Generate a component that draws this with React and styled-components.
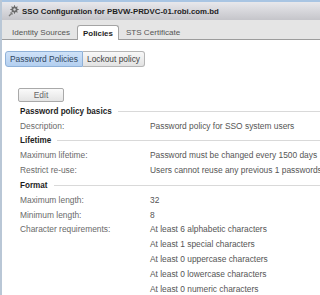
import React from "react";
import styled, { createGlobalStyle } from "styled-components";

const GlobalStyle = createGlobalStyle`
  html, body {
    margin: 0;
    padding: 0;
    overflow: hidden;
    background: #fff;
  }
  body {
    font-family: "Liberation Sans", Arial, sans-serif;
    font-size: 8.4px;
    color: #5c5c5c;
  }
`;

const rows = [
  { type: "header", text: "Password policy basics" },
  { label: "Description:", value: "Password policy for SSO system users" },
  { type: "header", text: "Lifetime" },
  { label: "Maximum lifetime:", value: "Password must be changed every 1500 days" },
  { label: "Restrict re-use:", value: "Users cannot reuse any previous 1 passwords" },
  { type: "header", text: "Format" },
  { label: "Maximum length:", value: "32" },
  { label: "Minimum length:", value: "8" },
  { label: "Character requirements:", value: "At least 6 alphabetic characters" },
  { label: "", value: "At least 1 special characters" },
  { label: "", value: "At least 0 uppercase characters" },
  { label: "", value: "At least 0 lowercase characters" },
  { label: "", value: "At least 0 numeric characters" },
];

const GearIcon = () => (
  <svg width="11" height="12" viewBox="0 0 11 12">
    <g fill="#6a6a6a">
      <circle cx="6.5" cy="4.5" r="3" />
      <rect x="6" y="0.3" width="1" height="8.4" />
      <rect x="2.3" y="4" width="8.4" height="1" />
      <rect x="6" y="0.3" width="1" height="8.4" transform="rotate(45 6.5 4.5)" />
      <rect x="6" y="0.3" width="1" height="8.4" transform="rotate(-45 6.5 4.5)" />
    </g>
    <circle cx="6.5" cy="4.5" r="1.2" fill="#d8d8dc" />
    <path d="M1 11 L4 8 M2.6 7.4 L4.6 9.4" stroke="#7a7a7a" strokeWidth="1.3" fill="none" />
  </svg>
);

const App = () => {
  return (
    <Frame>
      <GlobalStyle />
      <TitleBar>
        <GearIcon />
        <Title>SSO Configuration for PBVW-PRDVC-01.robi.com.bd</Title>
      </TitleBar>
      <TabBar>
        <Tab>Identity Sources</Tab>
        <Tab active>Policies</Tab>
        <Tab>STS Certificate</Tab>
      </TabBar>
      <Body>
        <SubTabs>
          <SubTab active>Password Policies</SubTab>
          <SubTab>Lockout policy</SubTab>
        </SubTabs>
        <EditButton>Edit</EditButton>
        <Details>
          {rows.map((row, i) =>
            row.type === "header" ? (
              <Header key={i}>{row.text}</Header>
            ) : (
              <React.Fragment key={i}>
                <Label>{row.label}</Label>
                <Value>{row.value}</Value>
              </React.Fragment>
            )
          )}
        </Details>
      </Body>
    </Frame>
  );
};

const Frame = styled.div`
  width: 320px;
  height: 295px;
  border-left: 2px solid #b9c7d6;
  box-sizing: border-box;
  overflow: hidden;
`;

const TitleBar = styled.div`
  height: 18px;
  border-top: 2px solid #a9c5e3;
  background: linear-gradient(#e8e8ec, #c5c5ca);
  display: flex;
  align-items: center;
  gap: 3px;
  padding-left: 6px;
`;

const Title = styled.span`
  font-weight: bold;
  font-size: 7.85px;
  color: #1e1e1e;
  white-space: nowrap;
`;

const TabBar = styled.div`
  height: 19px;
  background: #e5e5e5;
  border-bottom: 1px solid #9c9c9c;
  display: flex;
  align-items: flex-end;
  padding-left: 3px;
`;

const Tab = styled.div`
  height: ${(p) => (p.active ? "14px" : "13px")};
  padding: 0 ${(p) => (p.active ? "5px" : "6px")};
  display: flex;
  align-items: center;
  font-size: ${(p) => (p.active ? "7.9px" : "8.1px")};
  font-weight: ${(p) => (p.active ? "bold" : "normal")};
  color: ${(p) => (p.active ? "#1e1e1e" : "#555")};
  white-space: nowrap;
  background: ${(p) => (p.active ? "#fff" : "transparent")};
  border: 1px solid ${(p) => (p.active ? "#a4a4a4" : "transparent")};
  border-bottom: none;
  border-radius: 3px 3px 0 0;
  margin-bottom: ${(p) => (p.active ? "-1px" : "0")};
`;

const Body = styled.div`
  padding: 11px 0 0 3px;
`;

const SubTabs = styled.div`
  display: flex;
`;

const SubTab = styled.div`
  height: 14px;
  padding: 0 4px;
  display: flex;
  align-items: center;
  white-space: nowrap;
  color: ${(p) => (p.active ? "#2f4660" : "#444")};
  background: ${(p) =>
    p.active
      ? "linear-gradient(#cfe2f8, #b3cff0)"
      : "linear-gradient(#f8f8f8, #e2e2e2)"};
  border: 1px solid ${(p) => (p.active ? "#8fb1d8" : "#b5b5b5")};
  &:first-child {
    border-radius: 3px 0 0 3px;
  }
  &:last-child {
    border-radius: 0 3px 3px 0;
    border-left: none;
  }
`;

const EditButton = styled.div`
  margin: 21px 0 0 13px;
  width: 44px;
  height: 12px;
  border: 1px solid #a9a9a9;
  border-radius: 2px;
  background: linear-gradient(#fafafa, #e4e4e4);
  display: flex;
  align-items: center;
  justify-content: center;
  color: #666;
`;

const Details = styled.div`
  margin-top: 1.7px;
  padding-left: 15px;
  display: grid;
  grid-template-columns: 130px 1fr;
  grid-auto-rows: 14.8px;
  align-items: center;
`;

const Header = styled.div`
  grid-column: 1 / -1;
  display: flex;
  align-items: center;
  gap: 6px;
  font-weight: bold;
  font-size: 8.15px;
  color: #1e1e1e;
  white-space: nowrap;
  &::after {
    content: "";
    flex: 1;
    height: 1px;
    background: #d9d9d9;
  }
`;

const Label = styled.div`
  color: #6a6a6a;
  white-space: nowrap;
`;

const Value = styled.div`
  color: #555;
  white-space: nowrap;
`;

export default App;
